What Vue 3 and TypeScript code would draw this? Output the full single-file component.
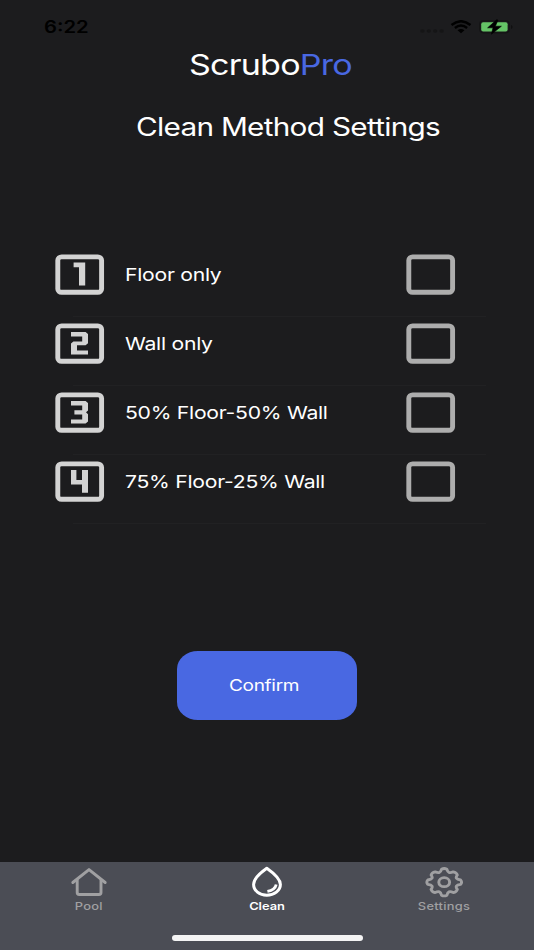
<script setup lang="ts">
import { ref } from 'vue'

interface Method {
  id: number
  label: string
  glyph: string
}

const methods: Method[] = [
  { id: 1, label: 'Floor only', glyph: 'M18.6 8.6H30.2V31.6H24V13.2H18.6Z' },
  { id: 2, label: 'Wall only', glyph: 'M16 9H30.6L33 11V20.2L30.6 22.3H22V27.4H33V31.6H16V20.6L18.4 18.4H27.2V13.4H16Z' },
  { id: 3, label: '50% Floor-50% Wall', glyph: 'M16 9H30.6L33 11V18.4L31 20.3L33 22.3V29.6L30.6 31.6H16V27.4H27.2V22.4H19.4V18.2H27.2V13.4H16Z' },
  { id: 4, label: '75% Floor-25% Wall', glyph: 'M16 9H21.4V19H27V9H33V31.8H27V23.4H16Z' },
]

const selected = ref<number | null>(null)
const toggle = (id: number) => {
  selected.value = selected.value === id ? null : id
}
</script>

<template>
  <div class="screen">
    <header class="status">
      <span class="time wide">6:22</span>
      <div class="indicators">
        <svg class="dots" width="26" height="4" viewBox="0 0 26 4">
          <ellipse v-for="i in 4" :key="i" :cx="i * 6.4 - 4" cy="2" rx="2.2" ry="1.8" fill="#151516" />
        </svg>
        <svg class="wifi" width="22" height="14" viewBox="0 0 22 14">
          <g fill="none" stroke="#000" stroke-width="2.4">
            <path d="M1.5 5Q11-2.6 20.5 5" />
            <path d="M4.9 8Q11 3 17.1 8" />
          </g>
          <path d="M7.5 10.3Q11 7.9 14.5 10.3L11 13.2Z" fill="#000" />
        </svg>
        <svg class="battery" width="34" height="16" viewBox="0 0 34 16">
          <rect x=".8" y="1.8" width="29.4" height="12" rx="3.5" fill="none" stroke="#141415" stroke-width="1.2" />
          <rect x="2.2" y="3.2" width="26.4" height="9.4" rx="2" fill="#65c466" />
          <path d="M32 6V10Q33.6 9.5 33.6 8T32 6Z" fill="#101011" />
          <path d="M17.6.8L8.6 8.8H14L12.4 15.2L22.4 7.2H16.4L19 1Z" fill="#000" stroke="#000" stroke-width=".6" />
        </svg>
      </div>
    </header>

    <h1 class="brand"><span class="wide">Scrubo<em>Pro</em></span></h1>
    <h2 class="heading"><span class="wide">Clean Method Settings</span></h2>

    <ul class="methods">
      <li v-for="m in methods" :key="m.id" class="method" @click="toggle(m.id)">
        <svg class="number" width="50" height="41" viewBox="0 0 50 41">
          <rect x="2.8" y="2.9" width="43.8" height="35.4" rx="3.8" ry="3.3" />
          <path :d="m.glyph" />
        </svg>
        <span class="label"><span class="wide">{{ m.label }}</span></span>
        <svg class="check" width="50" height="41" viewBox="0 0 50 41">
          <rect x="2.8" y="2.9" width="43.8" height="35.4" rx="3.8" ry="3.3" />
          <path v-if="selected === m.id" d="M14 20L22 28L36 13" />
        </svg>
      </li>
    </ul>

    <button class="confirm" type="button"><span class="wide">Confirm</span></button>

    <nav class="tabs">
      <div class="tab-row">
        <a class="tab">
          <svg width="38" height="32" viewBox="0 0 38 32">
            <g fill="none" stroke="currentColor" stroke-width="2.9" stroke-linecap="round" stroke-linejoin="round">
              <path d="M2.8 16.5L19 3.6L35.2 16.5" />
              <path d="M7.2 14V26.6Q7.2 28.5 9.2 28.5H29Q31 28.5 31 26.6V14" />
            </g>
          </svg>
          <span class="wide">Pool</span>
        </a>
        <a class="tab active">
          <svg width="38" height="32" viewBox="0 0 38 32">
            <g fill="none" stroke="currentColor" stroke-linejoin="round">
              <path stroke-width="3" d="M18.8 2.2C13 6.3 5.6 12.4 5.6 18.4C5.6 24.5 11.4 29.2 18.8 29.2S32.4 24.5 32.4 18.4C32.4 12.4 24.6 6.3 18.8 2.2Z" />
              <path stroke-width="2.8" d="M28.2 18.4Q27.2 23.8 19.4 25.3" />
            </g>
          </svg>
          <span class="wide">Clean</span>
        </a>
        <a class="tab settings">
          <svg width="40" height="32" viewBox="-.4 0 38.4 32" preserveAspectRatio="none">
            <g fill="none" stroke="currentColor" stroke-width="2.8" stroke-linejoin="round">
              <path d="M16.4 3.2Q19 1.8 21.6 3.2C22.4 6.8 24.2 7.5 27.7 5.8Q30.9 6.4 31.6 9C29.5 11.9 30.4 13.4 34.8 14Q36.5 16.2 34.8 18.4C30.4 19 29.5 20.5 31.6 23.4Q30.9 26 27.7 26.6C24.2 24.9 22.4 25.6 21.6 29.2Q19 30.6 16.4 29.2C15.6 25.6 13.8 24.9 10.3 26.6Q7.1 26 6.4 23.4C8.5 20.5 7.6 19 3.2 18.4Q1.5 16.2 3.2 14C7.6 13.4 8.5 11.9 6.4 9Q7.1 6.4 10.3 5.8C13.8 7.5 15.6 6.8 16.4 3.2Z" />
              <ellipse cx="19" cy="16.2" rx="5.2" ry="4.5" />
            </g>
          </svg>
          <span class="wide">Settings</span>
        </a>
      </div>
      <div class="home-bar"></div>
    </nav>
  </div>
</template>

<style>
body {
  margin: 0;
  background: #1c1c1e;
}
</style>

<style scoped>
.screen {
  box-sizing: border-box;
  width: 534px;
  height: 950px;
  display: flex;
  flex-direction: column;
  overflow: hidden;
  background: #1c1c1e;
  color: #fff;
  font-family: Inter, "Liberation Sans", sans-serif;
}

.wide {
  display: inline-block;
  white-space: nowrap;
  transform: scaleX(1.19);
  transform-origin: left center;
}

.status {
  height: 46px;
  box-sizing: border-box;
  padding: 16px 21.5px 0 44px;
  display: flex;
  justify-content: space-between;
  color: #000;
}

.time {
  height: 22px;
  font-size: 17px;
  line-height: 22px;
  font-weight: 600;
}

.indicators {
  display: flex;
  align-items: flex-start;
}

.dots {
  margin: 12.5px 4px 0 0;
}

.wifi {
  margin: 3.5px 6.5px 0 0;
}

.battery {
  margin-top: 2.5px;
}

.brand {
  height: 38px;
  margin: 0 0 0 189px;
  font-size: 28.6px;
  line-height: 38px;
  font-weight: 400;
  letter-spacing: -0.65px;
}

.brand em {
  font-style: normal;
  color: #4968e2;
}

.heading {
  height: 36px;
  margin: 25px 0 0 136px;
  font-size: 25px;
  line-height: 36px;
  font-weight: 400;
  letter-spacing: -0.6px;
}

.methods {
  list-style: none;
  margin: 103px 0 0 55.3px;
  padding: 0;
}

.method {
  box-sizing: border-box;
  height: 68.9px;
  width: 430.7px;
  display: flex;
  align-items: flex-start;
  padding: 6px 30px 0 0;
  background: linear-gradient(#212123, #212123) 18px 100% / 413px 1px no-repeat;
}

.number {
  fill: none;
  stroke: none;
}

.number rect {
  stroke: #d3d3d3;
  stroke-width: 4.9;
}

.number path {
  fill: #d3d3d3;
}

.label {
  flex: 1;
  height: 41px;
  padding-left: 19.4px;
  font-size: 17.8px;
  line-height: 41px;
  letter-spacing: -0.23px;
}

.check {
  fill: none;
  stroke: #adadad;
  stroke-width: 4.9;
}

.confirm {
  width: 180.5px;
  height: 69px;
  margin: 127px 0 0 176.5px;
  padding: 0 0 0 52px;
  border: 0;
  border-radius: 21px / 18px;
  background: #4968e2;
  color: #fff;
  font-family: inherit;
  font-size: 16px;
  line-height: 69px;
  letter-spacing: -0.27px;
  text-align: left;
}

.tabs {
  margin-top: auto;
  height: 88px;
  background: #4b4d55;
  display: flex;
  flex-direction: column;
  align-items: center;
}

.tab-row {
  width: 100%;
  display: grid;
  grid-template-columns: repeat(3, 1fr);
}

.tab {
  display: flex;
  flex-direction: column;
  align-items: center;
  padding-top: 4px;
  color: #a0a0a2;
  font-size: 10.8px;
  line-height: 17px;
  font-weight: 500;
  letter-spacing: 0.25px;
}

.tab .wide {
  transform-origin: center;
}

.tab.active {
  color: #fff;
  font-weight: 600;
  letter-spacing: 0;
}

.tab.settings {
  padding-right: 2px;
}

.home-bar {
  width: 191px;
  height: 6px;
  margin-top: 20px;
  border-radius: 3px;
  background: #f4f4f4;
}
</style>
